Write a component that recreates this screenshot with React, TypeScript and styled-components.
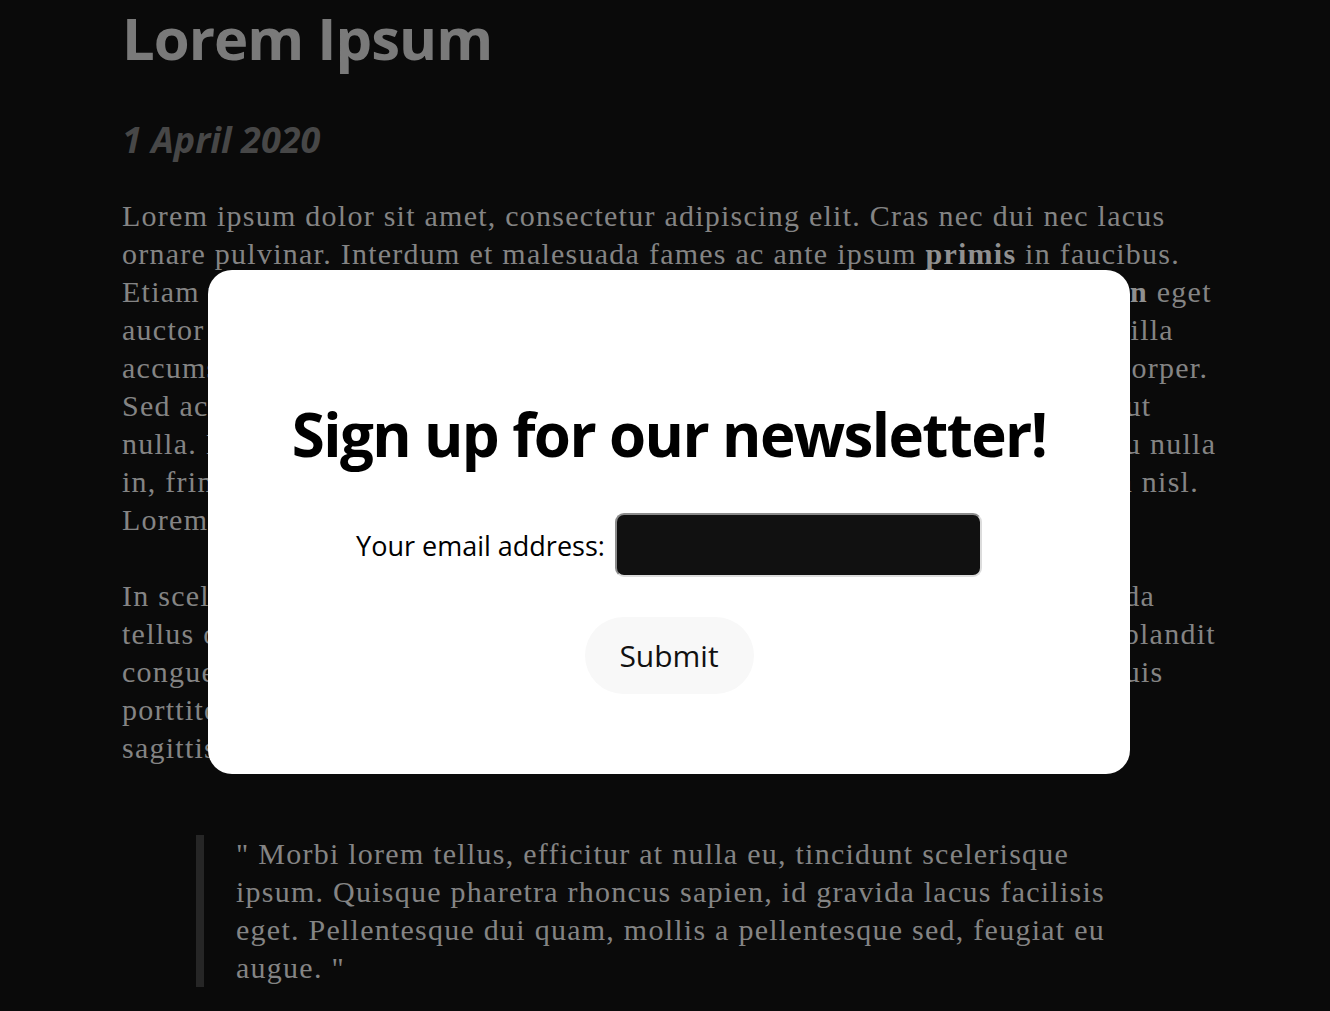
import React from "react";
import styled, { createGlobalStyle } from "styled-components";

const GlobalStyle = createGlobalStyle`
  html, body {
    margin: 0;
    padding: 0;
    background: #0a0a0a;
    overflow: hidden;
  }
  body {
    font-family: "Liberation Serif", "Times New Roman", serif;
  }
`;

const Page = styled.main`
  width: 1086px;
  margin: 0 auto;
  padding-top: 8px;
  height: 1011px;
  box-sizing: border-box;
`;

const Title = styled.h1`
  margin: 0;
  font-family: "Open Sans", "Noto Sans", sans-serif;
  font-weight: 700;
  font-size: 58px;
  line-height: 60px;
  letter-spacing: -1px;
  color: #7a7a7a;
`;

const DateLine = styled.h3`
  margin: 52px 0 0;
  font-family: "Open Sans", "Noto Sans", sans-serif;
  font-weight: 700;
  font-style: italic;
  font-size: 36px;
  line-height: 40px;
  color: #474747;
`;

const Paragraph = styled.p<{ $top: number }>`
  margin: ${(p) => p.$top}px 0 0;
  font-size: 30px;
  line-height: 38px;
  letter-spacing: 1.25px;
  color: #848484;
  white-space: nowrap;

  strong {
    font-weight: 700;
    color: #909090;
  }
`;

const Quote = styled.blockquote`
  margin: 68px 0 0 74px;
  padding-left: 32px;
  border-left: 8px solid #262626;
  font-size: 30px;
  line-height: 38px;
  letter-spacing: 1.25px;
  color: #848484;
  white-space: nowrap;
`;

const Modal = styled.section`
  position: fixed;
  top: 270px;
  left: 208px;
  width: 922px;
  height: 504px;
  box-sizing: border-box;
  padding-top: 128px;
  background: #ffffff;
  border-radius: 24px;
  display: flex;
  flex-direction: column;
  align-items: center;
`;

const ModalHeading = styled.h2`
  margin: 0;
  font-family: "Open Sans", "Noto Sans", sans-serif;
  font-weight: 700;
  font-size: 60px;
  line-height: 72px;
  letter-spacing: -1.6px;
  color: #000;
`;

const FormRow = styled.form`
  margin-top: 43px;
  display: flex;
  align-items: center;
  gap: 10px;
`;

const Label = styled.label`
  font-family: "Open Sans", "Noto Sans", sans-serif;
  font-size: 27px;
  color: #000;
`;

const EmailInput = styled.input`
  width: 367px;
  height: 64px;
  box-sizing: border-box;
  background: #111111;
  border: 2px solid;
  border-color: #8c8c8c #dcdcdc #dcdcdc #8c8c8c;
  border-radius: 9px;
  color: #fff;
  font-size: 24px;
  outline: none;
`;

const SubmitButton = styled.button`
  margin-top: 40px;
  width: 169px;
  height: 77px;
  border: none;
  border-radius: 39px;
  background: #f8f8f8;
  font-family: "Open Sans", "Noto Sans", sans-serif;
  font-size: 30px;
  color: #111;
  cursor: pointer;
`;

export default function App() {
  return (
    <>
      <GlobalStyle />
      <Page>
        <Title>Lorem Ipsum</Title>
        <DateLine>1 April 2020</DateLine>
        <Paragraph $top={37}>
          Lorem ipsum dolor sit amet, consectetur adipiscing elit. Cras nec dui nec lacus
          <br />
          ornare pulvinar. Interdum et malesuada fames ac ante ipsum <strong>primis</strong> in faucibus.
          <br />
          Etiam vitae tortor quis lectus varius posuere, nec ac nunc. Proin in <strong>accumsan</strong> eget
          <br />
          auctor lectus, vel dictum magna vitae. Nullam sit amet risus quis id mi fringilla
          <br />
          accumsan. Vivamus vehicula ipsum vel suscipit varius, nibh ligula et ullamcorper.
          <br />
          Sed ac eros vitae lorem tempor finibus. Donec rutrum nisi sed mauris porta ut
          <br />
          nulla. Integer sit amet ante a sapien dignissim pharetra, vel viverra augue, eu nulla
          <br />
          in, fringilla et ante. Suspendisse potenti. Donec at tortor, quis mauris lacinia nisl.
          <br />
          Lorem ipsum dolor sit amet.
        </Paragraph>
        <Paragraph $top={38}>
          In scelerisque justo eget nulla porttitor, sed finibus erat vehicula et malesuada
          <br />
          tellus ornare. Vestibulum tempor erat vitae turpis at commodo lectus ut sed blandit
          <br />
          congue. Nam eleifend sem at leo pretium, et mollis lorem tincidunt. Nulla quis
          <br />
          porttitor lorem ut tempus convallis.
          <br />
          sagittis mauris.
        </Paragraph>
        <Quote>
          " Morbi lorem tellus, efficitur at nulla eu, tincidunt scelerisque
          <br />
          ipsum. Quisque pharetra rhoncus sapien, id gravida lacus facilisis
          <br />
          eget. Pellentesque dui quam, mollis a pellentesque sed, feugiat eu
          <br />
          augue. "
        </Quote>
      </Page>
      <Modal>
        <ModalHeading>Sign up for our newsletter!</ModalHeading>
        <FormRow onSubmit={(e) => e.preventDefault()}>
          <Label htmlFor="email">Your email address:</Label>
          <EmailInput id="email" type="email" />
        </FormRow>
        <SubmitButton type="button">Submit</SubmitButton>
      </Modal>
    </>
  );
}
